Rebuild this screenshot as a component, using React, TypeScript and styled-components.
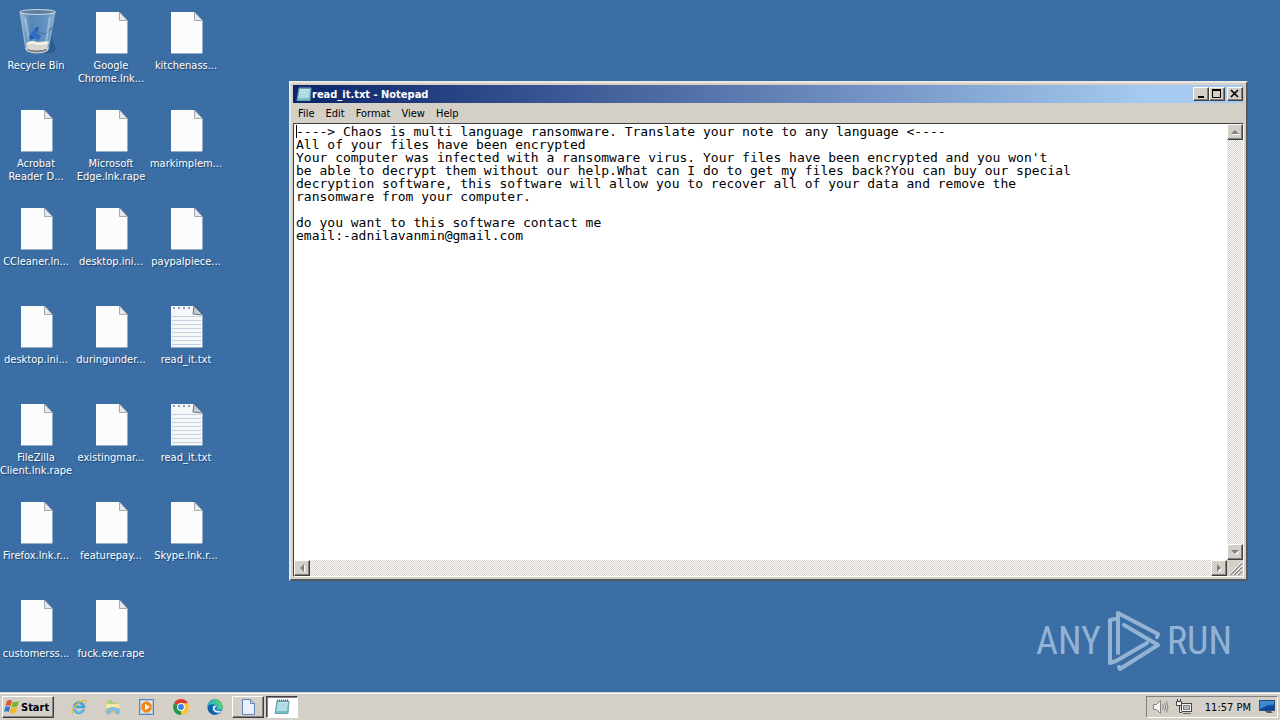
import React from 'react';
import styled, { createGlobalStyle, css } from 'styled-components';

const GlobalStyle = createGlobalStyle`
  * { box-sizing: border-box; }
  body { margin: 0; background: #3a6ea5; font-family: "DejaVu Sans Condensed", "DejaVu Sans", sans-serif; font-size: 11px; line-height: 13px; color: #000; }
  button, textarea { font: inherit; color: inherit; margin: 0; border-radius: 0; }
  button { padding: 0; border: 0; background: none; }
  svg { display: block; flex: none; }
`;

const raised = css`
  background: #d4d0c8;
  border: 1px solid;
  border-color: #fff #404040 #404040 #fff;
  box-shadow: inset -1px -1px #808080;
`;

const checker = css`
  background: repeating-conic-gradient(#fff 0 25%, #d4d0c8 0 50%) 0 0 / 2px 2px;
`;

const Screen = styled.div`
  display: flex;
  flex-direction: column;
  min-height: 100vh;
`;

const Desktop = styled.main`
  position: relative;
  flex: 1;
  overflow: hidden;
`;

const IconGrid = styled.div`
  display: grid;
  grid-auto-flow: column;
  grid-template-rows: repeat(6, 98px) auto;
  grid-auto-columns: 72px;
  column-gap: 3px;
  padding-top: 8px;
  width: max-content;
`;

const DesktopItem = styled.button`
  display: flex;
  flex-direction: column;
  align-items: center;
  justify-content: flex-start;
  gap: 3px;
  color: #fff;
  text-shadow: 1px 1px 1px #1d436e;
`;

const Label = styled.span`
  white-space: pre;
  text-align: center;
`;

const Window = styled.section`
  position: absolute;
  left: 289px;
  right: 32px;
  top: 81px;
  bottom: 111px;
  display: flex;
  flex-direction: column;
  padding: 2px;
  background: #d4d0c8;
  border: 2px solid;
  border-color: #e9e7e2 #55585c #55585c #e9e7e2;
`;

const TitleBar = styled.header`
  display: flex;
  align-items: center;
  height: 18px;
  padding: 0 1px 0 3px;
  background: linear-gradient(90deg, #0a246a, #a6caf0 90%);
  color: #fff;
`;

const Title = styled.h1`
  flex: 1;
  margin: 0;
  font-size: 11px;
  line-height: 13px;
`;

const CaptionButton = styled.button<{ $apart?: boolean }>`
  ${raised}
  width: 16px;
  height: 14px;
  margin-left: ${(p) => (p.$apart ? 2 : 0)}px;
`;

const MenuBar = styled.nav`
  display: flex;
  gap: 1px;
  height: 20px;
`;

const MenuItem = styled.button`
  padding: 0 5px;
`;

const Client = styled.div`
  flex: 1;
  display: grid;
  grid-template: minmax(0, 1fr) 16px / minmax(0, 1fr) 16px;
  border: 1px solid;
  border-color: #404040 #fff #fff #404040;
  min-height: 0;
`;

const Page = styled.div`
  position: relative;
  background: #fff;
`;

const Note = styled.textarea`
  display: block;
  width: 100%;
  height: 100%;
  padding: 1px 2px;
  border: 0;
  outline: 0;
  resize: none;
  overflow: hidden;
  white-space: pre;
  background: #fff;
  font-family: "DejaVu Sans Mono", monospace;
  font-size: 13px;
  line-height: 13px;
`;

const Caret = styled.span`
  position: absolute;
  left: 2px;
  top: 1px;
  width: 1px;
  height: 13px;
  background: #000;
`;

const ScrollTrack = styled.div<{ $across?: boolean }>`
  ${checker}
  display: flex;
  flex-direction: ${(p) => (p.$across ? 'row' : 'column')};
  justify-content: space-between;
`;

const ScrollButton = styled.button`
  ${raised}
  display: grid;
  place-items: center;
  width: 16px;
  height: 16px;
`;

const Grip = styled.div`
  display: flex;
  align-items: flex-end;
  justify-content: flex-end;
`;

const Watermark = styled.div`
  position: absolute;
  right: 48px;
  bottom: 20px;
  display: flex;
  align-items: center;
  gap: 6px;
  color: #93b3d5;
  font-family: "Liberation Sans Narrow", "Roboto Condensed", sans-serif;
  font-size: 38px;
  line-height: 62px;
`;

const Taskbar = styled.footer`
  display: flex;
  align-items: center;
  height: 28px;
  padding: 1px 2px 0;
  background: #d4d0c8;
  border-top: 1px solid #d4d0c8;
  box-shadow: inset 0 1px #fff;
`;

const StartButton = styled.button`
  ${raised}
  display: flex;
  align-items: center;
  gap: 1px;
  width: 52px;
  height: 22px;
  padding-left: 1px;
  font-weight: bold;
`;

const QuickLaunch = styled.div`
  display: flex;
  flex: 1;
  align-items: center;
  padding-left: 8px;
`;

const QuickButton = styled.button`
  display: grid;
  place-items: center;
  width: 34px;
  height: 22px;
`;

const TaskButton = styled.button<{ $active?: boolean }>`
  ${raised}
  display: grid;
  place-items: center;
  width: 32px;
  height: 22px;
  margin-right: 2px;
  ${(p) => p.$active && css`
    background: #fff;
    border-color: #404040 #fff #fff #404040;
    box-shadow: inset 1px 1px #808080;
  `}
`;

const Tray = styled.div`
  display: flex;
  align-items: center;
  height: 22px;
  padding: 0 2px 0 5px;
  border: 1px solid;
  border-color: #808080 #fff #fff #808080;
`;

const Clock = styled.time`
  margin: 0 8px 0 7px;
`;

const TrayIcon = styled.button`
  margin-right: 6px;
  &:last-child { margin-right: 0; }
`;

const FileIcon = () => (
  <svg width="48" height="48" viewBox="-1 0 48 48">
    <path d="M9 4H32L40 12V46H9Z" fill="#27517f" opacity=".6" />
    <path d="M8 4H31L39.500 12.500V45.500H8Z" fill="#fcfcfc" />
    <path d="M31.500 4V12.500H39.500Z" fill="#e6e9ec" stroke="#a2a9b1" />
  </svg>
);

const TextFileIcon = () => (
  <svg width="48" height="48" viewBox="-1 0 48 48">
    <path d="M9 4H32L40 12V46H9Z" fill="#27517f" opacity=".6" />
    <path d="M8 4H31L39.500 12.500V45.500H8Z" fill="#f5f7f9" />
    <path d="M9 14.500H38M9 18.500H38M9 22.500H38M9 26.500H38M9 30.500H38M9 34.500H38M9 38.500H38M9 42.500H38" stroke="#c3d2e2" />
    <path d="M10 6H30" stroke="#8c9fb2" strokeWidth="2" strokeDasharray="2 3" />
    <path d="M31 4L30 12L39.500 13V12.500Z" fill="#c3cad2" stroke="#66717d" />
  </svg>
);

const RecycleBin = () => (
  <svg width="48" height="48" viewBox="-1 0 48 48">
    <defs>
      <linearGradient id="binGlass" x1="0" x2="1">
        <stop offset="0" stopColor="#b3cce0" stopOpacity=".85" />
        <stop offset=".3" stopColor="#6391bf" stopOpacity=".7" />
        <stop offset=".75" stopColor="#74a2cd" stopOpacity=".7" />
        <stop offset="1" stopColor="#a5c0d9" stopOpacity=".8" />
      </linearGradient>
    </defs>
    <path d="M38 25L43 42Q39 46 31 45Z" fill="#254f7e" opacity=".55" />
    <path d="M7 4L13 42Q22 47 35 42L42 4Z" fill="url(#binGlass)" stroke="#94b4d0" />
    <path d="M13 35Q18 31 24 34L36 33L34 41Q24 44 14 41Z" fill="#d9d7d2" />
    <path d="M15 36Q20 33 25 36L34 35" stroke="#f8f6ef" strokeWidth="2" fill="none" />
    <path d="M16 28L22 20L24 25L28 28L26 32L20 30L16 33Z" fill="#2f6fc2" />
    <path d="M22 20L26 19L24 25M15 32L17 27L22 30Z" fill="#1f5cb0" />
    <path d="M25 24L32 26L40 19" stroke="#456d9d" fill="none" strokeWidth="1" />
    <path d="M13 40Q23 44 35 40L34 43Q24 47 14 43Z" fill="#807d78" stroke="#d5dde2" />
    <ellipse cx="24.500" cy="4" rx="17.500" ry="2.500" fill="#5f8099" stroke="#c6d7e3" strokeWidth="1.200" />
    <path d="M12 10L16 32M37 9L33 34" stroke="#e0edf5" opacity=".4" strokeWidth="2" />
  </svg>
);

const NotepadIcon = () => (
  <svg width="16" height="16" viewBox="0 0 16 16">
    <path d="M3 2H15L14 14.500H1Z" fill="#79bac5" stroke="#6aa3ae" />
    <path d="M4 3H14L12.500 12H2.500Z" fill="#c3e8ec" />
    <path d="M4 5H13M4 7H13M3 9H13M3 11H12" stroke="#9dcfd8" />
    <path d="M3 1.500H15" stroke="#56666b" strokeWidth="2" strokeDasharray="1 1" />
  </svg>
);

const WindowsFlag = () => (
  <svg width="16" height="16" viewBox="0 0 16 16">
    <path d="M3 2Q6 0 8 2L6.500 7Q4 5.500 1.500 7Z" fill="#e65427" />
    <path d="M9 2.500Q12 4 15 2L13.500 7Q10.500 9 7.500 7.500Z" fill="#72b62c" />
    <path d="M1.200 8Q4 6.500 6.200 8L5 13Q2.500 11.500 0 13Z" fill="#327ad0" />
    <path d="M7.200 8.500Q10 10 13.200 8L12 13Q9 15.500 5.800 13.500Z" fill="#f4b722" />
  </svg>
);

const IeIcon = () => (
  <svg width="18" height="18" viewBox="0 0 18 18" fill="none">
    <path d="M13.700 11.500A5 5 0 1 1 14 9H6" stroke="#3ea3dc" strokeWidth="2.600" />
    <path d="M13 12.200A5 5 0 0 1 4 9" stroke="#8bd3f2" />
    <path d="M3 15.500Q0 13 6 7Q13 1 15.500 2.500Q16.500 3.500 15 5.500" stroke="#e4b938" strokeWidth="1.400" />
  </svg>
);

const ExplorerIcon = () => (
  <svg width="18" height="18" viewBox="0 0 18 18">
    <path d="M2 3H7L8.500 5H15V14H2Z" fill="#ecd78f" stroke="#d9be74" />
    <path d="M4 2H8V5H11V8H4Z" fill="#a5cf86" />
    <path d="M2 6H15.500V13H2Z" fill="#f7e8a8" />
    <path d="M3 15.500V11Q9 8 15 11V15.500H12V13Q9 11.500 6 13V15.500Z" fill="#86c6e3" stroke="#5aa3ca" strokeWidth=".7" />
  </svg>
);

const PlayerIcon = () => (
  <svg width="18" height="18" viewBox="0 0 18 18">
    <rect x="1.500" y="1.500" width="14" height="15" fill="#a8cce8" stroke="#5487b5" />
    <rect x="3" y="3" width="11" height="12" fill="#dbeaf4" />
    <circle cx="8.500" cy="9" r="5.500" fill="#ef8418" stroke="#f8b65e" />
    <path d="M7 5.800L12 9L7 12.200Z" fill="#fff" />
  </svg>
);

const ChromeIcon = () => (
  <svg width="16" height="16" viewBox="0 0 16 16">
    <path d="M8 8L1.100 4A8 8 0 0 1 14.900 4Z" fill="#df3b30" />
    <path d="M8 8L14.900 4A8 8 0 0 1 8 16Z" fill="#fbc52d" />
    <path d="M8 8V16A8 8 0 0 1 1.100 4Z" fill="#24964c" />
    <path d="M8 4.200H14.900L11.300 10Z" fill="#fbc52d" />
    <circle cx="8" cy="8" r="3.900" fill="#fff" />
    <circle cx="8" cy="8" r="2.900" fill="#3f7de8" />
  </svg>
);

const EdgeIcon = () => (
  <svg width="16" height="16" viewBox="0 0 16 16">
    <circle cx="8" cy="8" r="7.700" fill="#147bc9" />
    <path d="M.4 7.500A7.700 7.700 0 0 1 15.700 8Q15.500 11 11.500 11Q9 10.500 10 8.500Q9 5 5 5Q2 5 .4 7.500Z" fill="#35bfb1" />
    <path d="M8 .3Q15.500.5 15.700 8Q15 11 11.500 10.500Q13 3 5 1Z" fill="#63ce61" opacity=".75" />
    <path d="M6.500 6.500Q3 9 6 12.500Q8 15 12 14Q8 17 4 14.700Q0 12 1 7.500Q3 5 6.500 6.500Z" fill="#155fa8" />
    <path d="M9.500 7.500Q7.500 8 7.500 10Q9 13 14.500 11.500L12.500 13.500Q8 14.500 6.200 11Q5 7 8 6.500Z" fill="#e9f1f4" />
  </svg>
);

const BlankPageIcon = () => (
  <svg width="16" height="18" viewBox="0 0 16 18">
    <path d="M2.500 1.500H10.500L14.500 5.500V16.500H2.500Z" fill="#e8f1fd" stroke="#6684b2" />
    <path d="M10.500 1.500V5.500H14.500" fill="#bdd0ed" stroke="#6684b2" />
  </svg>
);

const SpeakerIcon = () => (
  <svg width="18" height="16" viewBox="0 0 18 16" fill="none" stroke="#858585">
    <path d="M1.500 5.500H4.500L8.500 1.500V14.500L4.500 10.500H1.500Z" fill="#f5f5f3" />
    <path d="M10.500 5.500Q12 8 10.500 10.500M12.500 4Q15 8 12.500 12M14.500 2.500Q17.500 8 14.500 13.500" />
  </svg>
);

const NetworkIcon = () => (
  <svg width="16" height="16" viewBox="0 0 16 16" fill="none" stroke="#444">
    <rect x="5.500" y="4.500" width="10" height="8" fill="#f5f5f5" />
    <rect x="7.500" y="6.500" width="6" height="4" fill="#b8b8b8" stroke="#888" />
    <path d="M7 14.500H15" stroke="#666" strokeWidth="1" />
    <path d="M1.500 0V3M4.500 0V3M.5 2.500H5.500V6.500H.5ZM3.500 7V13.500H6" fill="#f4f4f4" />
  </svg>
);

const ScreenIcon = () => (
  <svg width="16" height="14" viewBox="0 0 16 14">
    <rect x=".5" y=".5" width="15" height="10" fill="#1769bd" stroke="#2b4f7b" />
    <path d="M1 1H15V4Q8 4 1 9Z" fill="#3d89d2" />
    <path d="M1 10Q7 5 15 6V10Z" fill="#0c4795" />
    <path d="M6 11H12L14 13H8Z" fill="#555e69" />
  </svg>
);

const LogoMark = () => (
  <svg width="54" height="62" viewBox="0 0 54 62" fill="none" stroke="#93b3d5" strokeWidth="4" strokeLinecap="round" strokeLinejoin="round">
    <path d="M11 43V3L51 24L50 27" />
    <path d="M8 9L3 10V53L9 51L40 33" />
    <path d="M17 15L51 35L13 59L12 57" />
  </svg>
);

type Direction = 'up' | 'down' | 'left' | 'right';

const arrowPaths: Record<Direction, string> = {
  up: 'M0 6L4 2L8 6Z',
  down: 'M0 2H8L4 6Z',
  left: 'M6 0V8L2 4Z',
  right: 'M2 0L6 4L2 8Z',
};

const ArrowButton = ({ to }: { to: Direction }) => (
  <ScrollButton aria-label={`Scroll ${to}`}>
    <svg width="8" height="8" viewBox="0 0 8 8"><path d={arrowPaths[to]} transform="translate(1 1)" fill="#fff" /><path d={arrowPaths[to]} fill="#808080" /></svg>
  </ScrollButton>
);

const files = [
  'Recycle Bin', 'Acrobat\nReader D...', 'CCleaner.ln...', 'desktop.ini...', 'FileZilla\nClient.lnk.rape', 'Firefox.lnk.r...', 'customerss...',
  'Google\nChrome.lnk...', 'Microsoft\nEdge.lnk.rape', 'desktop.ini...', 'duringunder...', 'existingmar...', 'featurepay...', 'fuck.exe.rape',
  'kitchenass...', 'markimplem...', 'paypalpiece...', 'read_it.txt', 'read_it.txt', 'Skype.lnk.r...',
];

const note = `----> Chaos is multi language ransomware. Translate your note to any language <----
All of your files have been encrypted
Your computer was infected with a ransomware virus. Your files have been encrypted and you won't
be able to decrypt them without our help.What can I do to get my files back?You can buy our special
decryption software, this software will allow you to recover all of your data and remove the
ransomware from your computer.

do you want to this software contact me
email:-adnilavanmin@gmail.com`;

const iconFor = (name: string) => {
  if (name === 'Recycle Bin') return <RecycleBin />;
  return name.endsWith('.txt') ? <TextFileIcon /> : <FileIcon />;
};

const launchers = [
  { name: 'Internet Explorer', icon: <IeIcon /> },
  { name: 'Explorer', icon: <ExplorerIcon /> },
  { name: 'Media Player', icon: <PlayerIcon /> },
  { name: 'Chrome', icon: <ChromeIcon /> },
  { name: 'Edge', icon: <EdgeIcon /> },
];

export default function App() {
  return (
    <Screen>
      <GlobalStyle />
      <Desktop>
        <IconGrid>
          {files.map((name, i) => (
            <DesktopItem key={i}>
              {iconFor(name)}
              <Label>{name}</Label>
            </DesktopItem>
          ))}
        </IconGrid>

        <Watermark>
          <span>ANY</span>
          <LogoMark />
          <span>RUN</span>
        </Watermark>

        <Window aria-label="Notepad">
          <TitleBar>
            <NotepadIcon />
            <Title>read_it.txt - Notepad</Title>
            <CaptionButton aria-label="Minimize">
              <svg width="14" height="12"><path d="M4 9H10" stroke="#000" strokeWidth="2" /></svg>
            </CaptionButton>
            <CaptionButton aria-label="Maximize">
              <svg width="14" height="12"><path d="M2.500 2V9.500H10.500V2" fill="none" stroke="#000" /><path d="M2 2H11" stroke="#000" strokeWidth="2" /></svg>
            </CaptionButton>
            <CaptionButton aria-label="Close" $apart>
              <svg width="14" height="12"><path d="M3 2L10 9M10 2L3 9" stroke="#000" strokeWidth="1.600" /></svg>
            </CaptionButton>
          </TitleBar>
          <MenuBar>
            {['File', 'Edit', 'Format', 'View', 'Help'].map((m) => <MenuItem key={m}>{m}</MenuItem>)}
          </MenuBar>
          <Client>
            <Page>
              <Note aria-label="Document text" defaultValue={note} spellCheck={false} wrap="off" />
              <Caret />
            </Page>
            <ScrollTrack>
              <ArrowButton to="up" />
              <ArrowButton to="down" />
            </ScrollTrack>
            <ScrollTrack $across>
              <ArrowButton to="left" />
              <ArrowButton to="right" />
            </ScrollTrack>
            <Grip>
              <svg width="14" height="14" viewBox="0 0 14 14">
                <path d="M1 13L13 1M5 13L13 5M9 13L13 9" stroke="#808080" strokeWidth="1.500" />
                <path d="M0 13L13 0M4 13L13 4M8 13L13 8" stroke="#fff" />
              </svg>
            </Grip>
          </Client>
        </Window>
      </Desktop>

      <Taskbar>
        <StartButton><WindowsFlag />Start</StartButton>
        <QuickLaunch>
          {launchers.map((l) => <QuickButton key={l.name} aria-label={l.name}>{l.icon}</QuickButton>)}
          <TaskButton aria-label="Document"><BlankPageIcon /></TaskButton>
          <TaskButton aria-label="Notepad window" $active><NotepadIcon /></TaskButton>
        </QuickLaunch>
        <Tray>
          <TrayIcon aria-label="Volume"><SpeakerIcon /></TrayIcon>
          <TrayIcon aria-label="Network"><NetworkIcon /></TrayIcon>
          <Clock>11:57 PM</Clock>
          <TrayIcon aria-label="Show desktop"><ScreenIcon /></TrayIcon>
        </Tray>
      </Taskbar>
    </Screen>
  );
}
